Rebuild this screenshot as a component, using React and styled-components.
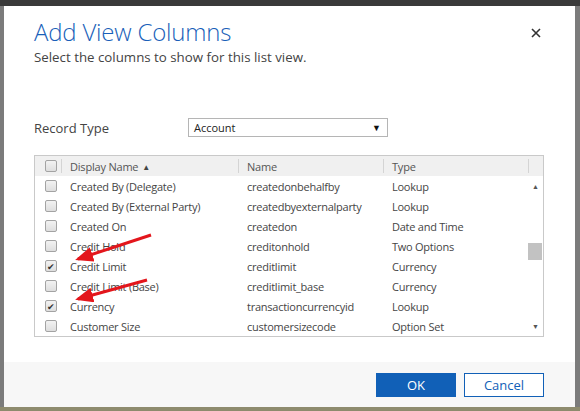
import React from "react";
import styled, { createGlobalStyle } from "styled-components";

const GlobalStyle = createGlobalStyle`
  html, body {
    margin: 0;
    padding: 0;
    background: #7b7b7b;
    font-family: "Segoe UI", "Open Sans", "Noto Sans", sans-serif;
  }
`;

const rows = [
  { label: "Created By (Delegate)", name: "createdonbehalfby", type: "Lookup" },
  { label: "Created By (External Party)", name: "createdbyexternalparty", type: "Lookup" },
  { label: "Created On", name: "createdon", type: "Date and Time" },
  { label: "Credit Hold", name: "creditonhold", type: "Two Options" },
  { label: "Credit Limit", name: "creditlimit", type: "Currency", checked: true },
  { label: "Credit Limit (Base)", name: "creditlimit_base", type: "Currency" },
  { label: "Currency", name: "transactioncurrencyid", type: "Lookup", checked: true },
  { label: "Customer Size", name: "customersizecode", type: "Option Set" },
];

export default function App() {
  return (
    <Page>
      <GlobalStyle />
      <TopStrip />
      <Dialog>
        <Body>
          <TitleRow>
            <Title>Add View Columns</Title>
            <Close aria-label="Close">
              <svg width="10" height="10" viewBox="0 0 10 10">
                <path d="M1 1 L9 9 M9 1 L1 9" stroke="#333" strokeWidth="1.6" />
              </svg>
            </Close>
          </TitleRow>
          <Subtitle>Select the columns to show for this list view.</Subtitle>

          <FieldRow>
            <FieldLabel>Record Type</FieldLabel>
            <Select>
              <span>Account</span>
              <Caret>▼</Caret>
            </Select>
          </FieldRow>

          <Grid>
            <HeaderRow>
              <HeadCell $first>
                <Check />
              </HeadCell>
              <HeadCell>
                Display Name <SortArrow>▲</SortArrow>
              </HeadCell>
              <HeadCell>Name</HeadCell>
              <HeadCell>Type</HeadCell>
              <HeadCell />
            </HeaderRow>
            <GridBody>
              <RowList>
                {rows.map((r) => (
                  <Row key={r.name}>
                    <CheckCell>
                      <Check $checked={r.checked}>{r.checked ? "✔" : ""}</Check>
                    </CheckCell>
                    <Cell>{r.label}</Cell>
                    <Cell>{r.name}</Cell>
                    <Cell>{r.type}</Cell>
                  </Row>
                ))}
              </RowList>
              <ScrollBar>
                <ScrollArrow>▲</ScrollArrow>
                <Track>
                  <Thumb />
                </Track>
                <ScrollArrow>▼</ScrollArrow>
              </ScrollBar>
            </GridBody>
            <Arrows width="510" height="183" viewBox="0 0 510 183">
              <defs>
                <marker
                  id="head"
                  markerWidth="6"
                  markerHeight="5"
                  refX="5"
                  refY="2.5"
                  orient="auto"
                  markerUnits="strokeWidth"
                >
                  <path d="M0 0 L6 2.5 L0 5 Z" fill="#e3161c" />
                </marker>
              </defs>
              <line x1="117" y1="80" x2="44" y2="104" stroke="#e3161c" strokeWidth="3" markerEnd="url(#head)" />
              <line x1="113" y1="125" x2="44" y2="144" stroke="#e3161c" strokeWidth="3" markerEnd="url(#head)" />
            </Arrows>
          </Grid>
        </Body>
        <Footer>
          <Button $primary>OK</Button>
          <Button>Cancel</Button>
        </Footer>
      </Dialog>
      <BottomStrip />
    </Page>
  );
}

const Page = styled.div`
  width: 580px;
  height: 411px;
  overflow: hidden;
  display: flex;
  flex-direction: column;
`;

const TopStrip = styled.div`
  height: 6px;
  background: #3a3a3a;
  flex-shrink: 0;
`;

const BottomStrip = styled.div`
  flex: 1;
  background: #8e8b6e;
`;

const Dialog = styled.div`
  margin-left: 4px;
  width: 571px;
  height: 401px;
  background: #fff;
  display: flex;
  flex-direction: column;
  box-sizing: border-box;
`;

const Body = styled.div`
  flex: 1;
  padding: 8px 30px 0 30px;
  display: flex;
  flex-direction: column;
`;

const TitleRow = styled.div`
  display: flex;
  align-items: center;
  justify-content: space-between;
  height: 34px;
`;

const Title = styled.h1`
  margin: 0;
  font-weight: 300;
  font-size: 24px;
  color: #1a5fb9;
  letter-spacing: -0.2px;
`;

const Close = styled.button`
  border: none;
  background: none;
  padding: 0;
  margin-right: 4px;
  margin-top: 3px;
  display: flex;
  cursor: pointer;
`;

const Subtitle = styled.p`
  margin: 0;
  font-size: 13.3px;
  color: #444;
  line-height: 18px;
`;

const FieldRow = styled.div`
  display: flex;
  align-items: center;
  margin-top: 52px;
  height: 19px;
`;

const FieldLabel = styled.div`
  width: 154px;
  font-size: 13px;
  color: #444;
`;

const Select = styled.div`
  width: 200px;
  height: 19px;
  box-sizing: border-box;
  border: 1px solid #b5b5b5;
  display: flex;
  align-items: center;
  justify-content: space-between;
  padding: 0 6px 0 5px;
  font-size: 11px;
  color: #222;
`;

const Caret = styled.span`
  font-size: 9px;
  color: #111;
`;

const Grid = styled.div`
  position: relative;
  margin-top: 18px;
  width: 510px;
  border: 1px solid #c9c9c9;
  box-sizing: border-box;
`;

const cols = "26px 177px 145px 145px";

const HeaderRow = styled.div`
  display: grid;
  grid-template-columns: ${cols} 1fr;
  height: 20px;
  background: #f0f0f0;
`;

const HeadCell = styled.div`
  position: relative;
  display: flex;
  align-items: center;
  padding-left: ${(p) => (p.$first ? "10px" : "9px")};
  font-size: 11px;
  letter-spacing: -0.2px;
  color: #555;
  ${(p) =>
    !p.$first &&
    `&:before {
      content: "";
      position: absolute;
      left: 0;
      top: 3px;
      bottom: 3px;
      width: 1px;
      background: #d4d4d4;
    }`}
`;

const SortArrow = styled.span`
  font-size: 8px;
  color: #444;
  margin-left: 4px;
`;

const GridBody = styled.div`
  display: flex;
`;

const RowList = styled.div`
  display: flex;
  flex-direction: column;
`;

const Row = styled.div`
  display: grid;
  grid-template-columns: ${cols};
  height: 20px;
`;

const CheckCell = styled.div`
  display: flex;
  align-items: center;
  padding-left: 10px;
`;

const Cell = styled.div`
  display: flex;
  align-items: center;
  padding-left: 9px;
  font-size: 11px;
  letter-spacing: -0.25px;
  color: #454545;
  white-space: nowrap;
`;

const Check = styled.span`
  width: 12px;
  height: 12px;
  box-sizing: border-box;
  border: 1px solid #a3a3a3;
  border-radius: 2px;
  background: linear-gradient(#f2f2f2, #dedede);
  display: flex;
  align-items: center;
  justify-content: center;
  font-size: 9px;
  letter-spacing: 0;
  line-height: 1;
  color: #333;
`;

const ScrollBar = styled.div`
  flex: 1;
  display: flex;
  flex-direction: column;
  align-items: center;
  height: 160px;
`;

const ScrollArrow = styled.div`
  height: 20px;
  display: flex;
  align-items: center;
  font-size: 7px;
  color: #555;
`;

const Track = styled.div`
  flex: 1;
  width: 100%;
  position: relative;
`;

const Thumb = styled.div`
  position: absolute;
  left: 0;
  right: 1px;
  top: 47px;
  height: 17px;
  background: #c2c2c2;
`;

const Arrows = styled.svg`
  position: absolute;
  left: -1px;
  top: -1px;
  pointer-events: none;
  overflow: visible;
`;

const Footer = styled.div`
  height: 44px;
  flex-shrink: 0;
  background: #f7f7f7;
  display: flex;
  justify-content: flex-end;
  align-items: center;
  gap: 8px;
  padding-right: 31px;
  padding-top: 1px;
`;

const Button = styled.button`
  width: 80px;
  height: 24px;
  box-sizing: border-box;
  border: 1px solid #1160b7;
  background: ${(p) => (p.$primary ? "#1160b7" : "#fff")};
  color: ${(p) => (p.$primary ? "#fff" : "#1160b7")};
  font-family: inherit;
  font-size: 13px;
  padding: 0;
  cursor: pointer;
`;
